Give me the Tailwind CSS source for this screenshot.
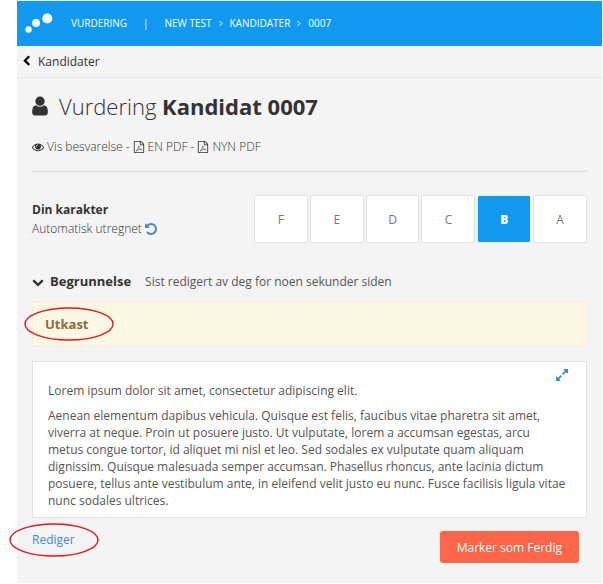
<!DOCTYPE html>
<html lang="no">
<head>
  <meta charset="UTF-8" />
  <meta name="viewport" content="width=device-width, initial-scale=1.0" />
  <title>Vurdering - Kandidat 0007</title>
  <script src="https://cdn.jsdelivr.net/npm/@tailwindcss/browser@4"></script>
</head>
<body class="bg-white pt-px pl-[17px] pr-px font-['Open_Sans',sans-serif] text-[12px] leading-[17px] text-[#333]">
  <svg class="hidden">
    <symbol id="pdf" viewBox="0 0 1792 1792">
      <path d="M1596 380q28 28 48 76t20 88v1152q0 40-28 68t-68 28h-1344q-40 0-68-28t-28-68v-1600q0-40 28-68t68-28h896q40 0 88 20t76 48zm-444-244v376h376q-10-29-22-41l-313-313q-12-12-41-22zm384 1528v-1024h-416q-40 0-68-28t-28-68v-416h-768v1536h1280z" />
      <path d="M480 1480C640 1400 820 1040 840 780C840 700 900 700 890 790C870 1020 1050 1240 1290 1300C1360 1320 1350 1240 1270 1240C1010 1230 760 1290 540 1400C450 1450 420 1510 480 1480Z" fill="none" stroke="currentColor" stroke-width="75" />
    </symbol>
  </svg>

  <div class="bg-[#f4f4f4] pb-5">
    <header class="flex items-center h-[45px] bg-[#1199f0] text-white text-[10px]">
      <svg class="w-7 h-5 ml-2 mb-px" viewBox="0 0 28 20" fill="currentColor">
        <circle cx="3.500" cy="16.500" r="3.200" /><circle cx="11" cy="10" r="3.900" /><circle cx="22.300" cy="5.500" r="5.100" />
      </svg>
      <nav class="flex items-center ml-[18px]">
        <a href="#">VURDERING</a>
        <span class="mx-4">|</span>
        <a href="#">NEW TEST</a>
        <svg class="w-1 h-[7px] mx-[7px]" viewBox="0 0 4 7" fill="none" stroke="currentColor"><path d="M.5 1L3 3.500.5 6" /></svg>
        <a href="#">KANDIDATER</a>
        <svg class="w-1 h-[7px] mx-[7px]" viewBox="0 0 4 7" fill="none" stroke="currentColor"><path d="M.5 1L3 3.500.5 6" /></svg>
        <a href="#">0007</a>
      </nav>
    </header>

    <div class="flex items-center h-8 pb-px pl-1 border-b border-[#e9e9e9]">
      <a href="#" class="flex items-center gap-[6px]">
        <svg class="w-[11px] h-3 text-black" viewBox="0 0 1792 1792" fill="currentColor"><path d="M1427 301l-531 531 531 531q19 19 19 45t-19 45l-166 166q-19 19-45 19t-45-19l-742-742q-19-19-19-45t19-45l742-742q19-19 45-19t45 19l166 166q19 19 19 45t-19 45z" /></svg>
        Kandidater
      </a>
    </div>

    <main class="pl-[15px] pr-[15px]">
      <h1 class="flex items-center pt-[10px] text-[22px] leading-9 font-light">
        <svg class="w-[22px] h-[22px] -ml-[3px] mr-2" viewBox="0 0 1792 1792" fill="currentColor"><path d="M1536 1399q0 109-62.500 187t-150.500 78h-854q-88 0-150.500-78t-62.500-187q0-85 8.500-160.500t31.500-152 58.500-131 94-89 134.500-34.500q131 128 313 128t313-128q76 0 134.500 34.500t94 89 58.500 131 31.500 152 8.500 160.500zm-256-887q0 159-112.500 271.500t-271.500 112.500-271.500-112.500-112.500-271.500 112.500-271.500 271.500-112.500 271.500 112.500 112.500 271.500z" /></svg>
        <span>Vurdering <b class="font-bold">Kandidat 0007</b></span>
      </h1>

      <div class="flex items-center gap-[3px] pt-[14px] pb-4 font-light border-b border-[#ddd]">
        <a href="#" class="flex items-center gap-[3px]">
          <svg class="w-3 h-3" viewBox="0 0 1792 1792" fill="currentColor"><path d="M1664 960q-152-236-381-353 61 104 61 225 0 185-131.500 316.500t-316.500 131.500-316.500-131.500-131.500-316.500q0-121 61-225-229 117-381 353 133 205 333.500 326.500t434.500 121.500 434.500-121.500 333.500-326.500zm-720-384q0-20-14-34t-34-14q-125 0-214.500 89.500t-89.500 214.500q0 20 14 34t34 14 34-14 14-34q0-86 61-147t147-61q20 0 34-14t14-34zm848 384q0 34-20 69-140 230-376.500 368.500t-499.500 138.500-499.500-139-376.500-368q-20-35-20-69t20-69q140-229 376.500-368t499.500-139 499.500 139 376.500 368q20 35 20 69z" /></svg>
          Vis besvarelse
        </a>
        <span>-</span>
        <a href="#" class="flex items-center gap-[3px]"><svg class="w-3 h-3" fill="currentColor"><use href="#pdf" /></svg>EN PDF</a>
        <span>-</span>
        <a href="#" class="flex items-center gap-[3px]"><svg class="w-3 h-3" fill="currentColor"><use href="#pdf" /></svg>NYN PDF</a>
      </div>

      <section class="flex items-center justify-between pt-[23px]">
        <div class="leading-[19px]">
          <h2 class="font-bold">Din karakter</h2>
          <div class="flex items-center gap-[3px] font-light">
            Automatisk utregnet
            <button type="button" aria-label="Angre" class="text-[#428bca]">
              <svg class="w-3 h-3" viewBox="128 128 1536 1536" fill="currentColor"><path d="M1664 896q0 156-61 298t-164 245-245 164-298 61q-172 0-327-72.500t-264-204.500q-7-10-6.500-22.500t8.500-20.500l137-138q10-9 25-9 16 2 23 12 73 95 179 147t225 52q104 0 198.500-40.500t163.500-109.500 109.500-163.500 40.500-198.500-40.500-198.500-109.500-163.500-163.500-109.500-198.500-40.500q-98 0-188 35.500t-160 101.500l137 138q31 30 14 69-17 40-59 40h-448q-26 0-45-19t-19-45v-448q0-42 40-59 39-17 69 14l130 129q107-101 244.500-156.500t284.500-55.500q156 0 298 61t245 164 164 245 61 298z" /></svg>
            </button>
          </div>
        </div>
        <div class="grid grid-cols-6 gap-[2px] w-3/5 text-[#777]">
          <button type="button" class="h-12 bg-white border border-[#e3e3e3] rounded-xs">F</button>
          <button type="button" class="h-12 bg-white border border-[#e3e3e3] rounded-xs">E</button>
          <button type="button" class="h-12 bg-white border border-[#e3e3e3] rounded-xs">D</button>
          <button type="button" class="h-12 bg-white border border-[#e3e3e3] rounded-xs">C</button>
          <button type="button" class="h-12 bg-[#1199f0] bg-clip-padding border border-[#e3f1fb] rounded-xs text-white font-extrabold">B</button>
          <button type="button" class="h-12 bg-white border border-[#e3e3e3] rounded-xs">A</button>
        </div>
      </section>

      <section>
        <div class="flex items-center pt-[30px] pb-3">
          <button type="button" class="flex items-center gap-[6px] text-[13px] leading-[17px] font-bold">
            <svg class="w-3 h-3" viewBox="0 0 1792 1792" fill="currentColor"><path d="M1683 808l-742 741q-19 19-45 19t-45-19l-742-741q-19-19-19-45.500t19-45.500l166-165q19-19 45-19t45 19l531 531 531-531q19-19 45-19t45 19l166 165q19 19 19 45.500t-19 45.500z" /></svg>
            Begrunnelse
          </button>
          <span class="ml-[14px] text-[#555]">Sist redigert av deg for noen sekunder siden</span>
        </div>

        <div class="relative flex items-center h-11 px-3 bg-[#fcf8e3] border border-[#faf1dc] rounded-xs text-[13px] font-bold text-[#8a6d3b]">
          Utkast
          <svg class="absolute -left-[9px] top-1 w-[90px] h-[34px]" viewBox="0 0 90 34" fill="none" stroke="#e8141c" stroke-width="1.400"><ellipse cx="45" cy="17" rx="44" ry="16" /></svg>
        </div>

        <article class="relative mt-[15px] pt-5 pb-2 pl-[15px] pr-5 bg-white border border-[#e3e3e3] text-[#555]">
          <button type="button" aria-label="Utvid" class="absolute top-[7px] right-[18px] text-[#428bca]">
            <svg class="w-3 h-3" viewBox="128 128 1536 1536" fill="currentColor"><path d="M883 1056q0 13-10 23l-332 332 144 144q19 19 19 45t-19 45-45 19h-448q-26 0-45-19t-19-45v-448q0-26 19-45t45-19 45 19l144 144 332-332q10-10 23-10t23 10l114 114q10 10 10 23zm781-864v448q0 26-19 45t-45 19-45-19l-144-144-332 332q-10 10-23 10t-23-10l-114-114q-10-10-10-23t10-23l332-332-144-144q-19-19-19-45t19-45 45-19h448q26 0 45 19t19 45z" /></svg>
          </button>
          <p class="mb-2">Lorem ipsum dolor sit amet, consectetur adipiscing elit.</p>
          <p>Aenean elementum dapibus vehicula. Quisque est felis, faucibus vitae pharetra sit amet, viverra at neque. Proin ut posuere justo. Ut vulputate, lorem a accumsan egestas, arcu metus congue tortor, id aliquet mi nisl et leo. Sed sodales ex vulputate quam aliquam dignissim. Quisque malesuada semper accumsan. Phasellus rhoncus, ante lacinia dictum posuere, tellus ante vestibulum ante, in eleifend velit justo eu nunc. Fusce facilisis ligula vitae nunc sodales ultrices.</p>
        </article>

        <div class="flex items-start justify-between pt-[13px] pr-2">
          <div class="relative">
            <a href="#" class="text-[#428bca]">Rediger</a>
            <svg class="absolute -left-[23px] -top-2 w-[90px] h-[34px]" viewBox="0 0 90 34" fill="none" stroke="#e8141c" stroke-width="1.400"><ellipse cx="45" cy="17" rx="44" ry="16" /></svg>
          </div>
          <button type="button" class="h-8 px-[17px] bg-[#ff6549] rounded-[3px] text-white">Marker som Ferdig</button>
        </div>
      </section>
    </main>
  </div>
</body>
</html>
